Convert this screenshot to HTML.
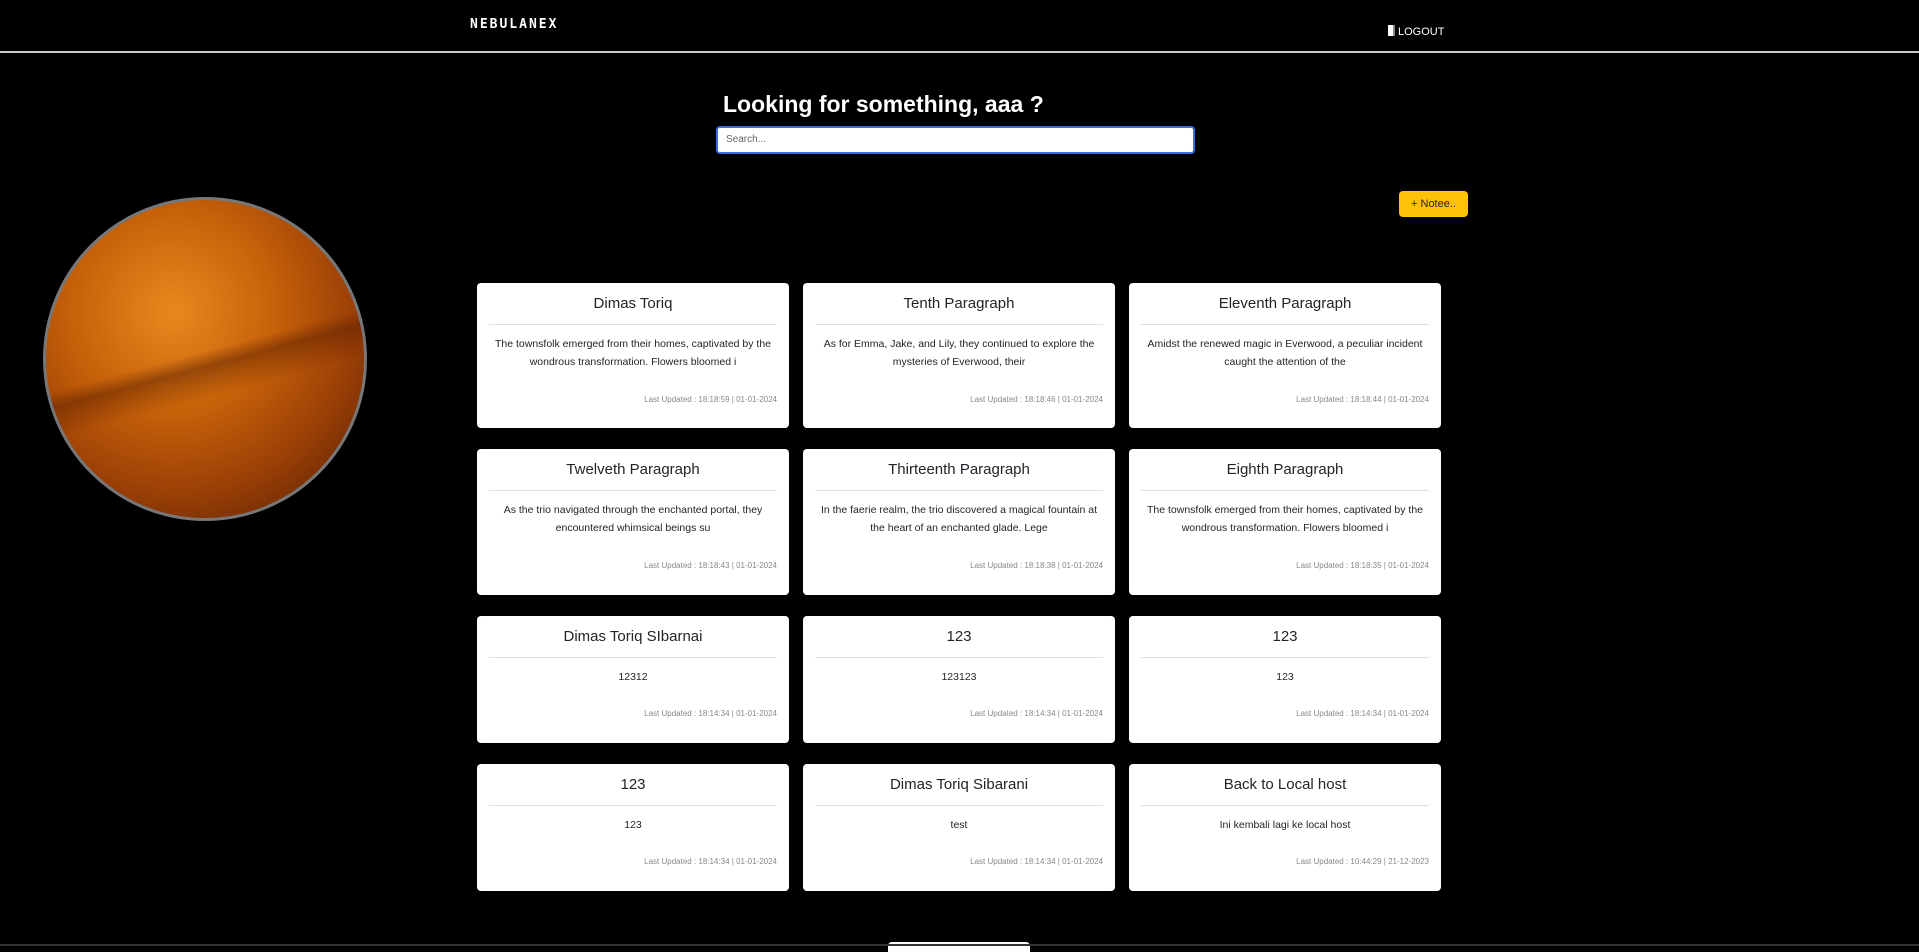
<!DOCTYPE html>
<html><head><meta charset="utf-8"><style>
*{box-sizing:border-box;margin:0;padding:0}
body{width:1919px;height:946px;background:#000;font-family:"Liberation Sans",sans-serif;position:relative;overflow:hidden;color:#212529}
.nav{position:absolute;left:0;top:0;width:1919px;height:53px;border-bottom:2px solid #ccc}
.logo{position:absolute;left:470px;top:17px;color:#fff;font-family:"DejaVu Sans Mono",monospace;font-weight:bold;font-size:13px;letter-spacing:2px}
.logout{position:absolute;left:1388px;top:25px;color:#fff;font-size:11px}
.logout i{display:inline-block;width:7px;height:11px;background:#fff;margin-right:3px;vertical-align:-1px;border-right:2px solid #888}
h1{position:absolute;left:723px;top:91px;color:#fff;font-size:23px;font-weight:bold}
.search{position:absolute;left:716px;top:126px;width:479px;height:28px;background:#fff;border:2px solid #3b6fe0;border-radius:4px;font-size:10px;color:#666;padding:6px 8px}
.btn{position:absolute;left:1399px;top:191px;width:69px;height:26px;background:#ffc107;border-radius:4px;font-size:11px;text-align:center;line-height:26px;color:#222}
.planet{position:absolute;left:43px;top:197px;width:324px;height:324px;border-radius:50%;border:3px solid #777;background:linear-gradient(165deg,transparent 48%,rgba(90,30,0,.5) 52%,transparent 60%),radial-gradient(circle at 40% 35%,#e7891e 0%,#c8620a 35%,#9a3f06 65%,#4a1a02 100%)}
.card{position:absolute;background:#fff;border-radius:4px;width:312px;text-align:center}
.card h5{font-size:15px;font-weight:normal;margin-top:12px;height:22px}
.card hr{border:0;border-top:1px solid #dde;margin:7px 12px 0}
.card p{font-size:10.5px;line-height:18px;margin:10px 10px 0;height:40px}
.card small{position:absolute;right:12px;font-size:8px;color:#888}
.pg{position:absolute;left:888px;top:942px;width:142px;height:10px;background:#fff;border-radius:4px 4px 0 0}
.bar{position:absolute;left:0;top:944px;width:1919px;height:2px;background:#333}
</style></head><body>
<div class="nav"><div class="logo">NEBULANEX</div><div class="logout"><i></i>LOGOUT</div></div>
<h1>Looking for something, aaa ?</h1>
<div class="search">Search...</div>
<div class="btn">+ Notee..</div>
<div class="planet"></div>

<div class="card" style="left:477px;top:283px;height:145px"><h5>Dimas Toriq</h5><hr><p>The townsfolk emerged from their homes, captivated by the wondrous transformation. Flowers bloomed i</p><small style="top:112px">Last Updated : 18:18:59 | 01-01-2024</small></div>
<div class="card" style="left:803px;top:283px;height:145px"><h5>Tenth Paragraph</h5><hr><p>As for Emma, Jake, and Lily, they continued to explore the mysteries of Everwood, their</p><small style="top:112px">Last Updated : 18:18:46 | 01-01-2024</small></div>
<div class="card" style="left:1129px;top:283px;height:145px"><h5>Eleventh Paragraph</h5><hr><p>Amidst the renewed magic in Everwood, a peculiar incident caught the attention of the</p><small style="top:112px">Last Updated : 18:18:44 | 01-01-2024</small></div>

<div class="card" style="left:477px;top:449px;height:146px"><h5>Twelveth Paragraph</h5><hr><p>As the trio navigated through the enchanted portal, they encountered whimsical beings su</p><small style="top:112px">Last Updated : 18:18:43 | 01-01-2024</small></div>
<div class="card" style="left:803px;top:449px;height:146px"><h5>Thirteenth Paragraph</h5><hr><p>In the faerie realm, the trio discovered a magical fountain at the heart of an enchanted glade. Lege</p><small style="top:112px">Last Updated : 18:18:38 | 01-01-2024</small></div>
<div class="card" style="left:1129px;top:449px;height:146px"><h5>Eighth Paragraph</h5><hr><p>The townsfolk emerged from their homes, captivated by the wondrous transformation. Flowers bloomed i</p><small style="top:112px">Last Updated : 18:18:35 | 01-01-2024</small></div>

<div class="card" style="left:477px;top:616px;height:127px"><h5>Dimas Toriq SIbarnai</h5><hr><p style="height:22px">12312</p><small style="top:93px">Last Updated : 18:14:34 | 01-01-2024</small></div>
<div class="card" style="left:803px;top:616px;height:127px"><h5>123</h5><hr><p style="height:22px">123123</p><small style="top:93px">Last Updated : 18:14:34 | 01-01-2024</small></div>
<div class="card" style="left:1129px;top:616px;height:127px"><h5>123</h5><hr><p style="height:22px">123</p><small style="top:93px">Last Updated : 18:14:34 | 01-01-2024</small></div>

<div class="card" style="left:477px;top:764px;height:127px"><h5>123</h5><hr><p style="height:22px">123</p><small style="top:93px">Last Updated : 18:14:34 | 01-01-2024</small></div>
<div class="card" style="left:803px;top:764px;height:127px"><h5>Dimas Toriq Sibarani</h5><hr><p style="height:22px">test</p><small style="top:93px">Last Updated : 18:14:34 | 01-01-2024</small></div>
<div class="card" style="left:1129px;top:764px;height:127px"><h5>Back to Local host</h5><hr><p style="height:22px">Ini kembali lagi ke local host</p><small style="top:93px">Last Updated : 10:44:29 | 21-12-2023</small></div>

<div class="pg"></div>
<div class="bar"></div>
</body></html>
